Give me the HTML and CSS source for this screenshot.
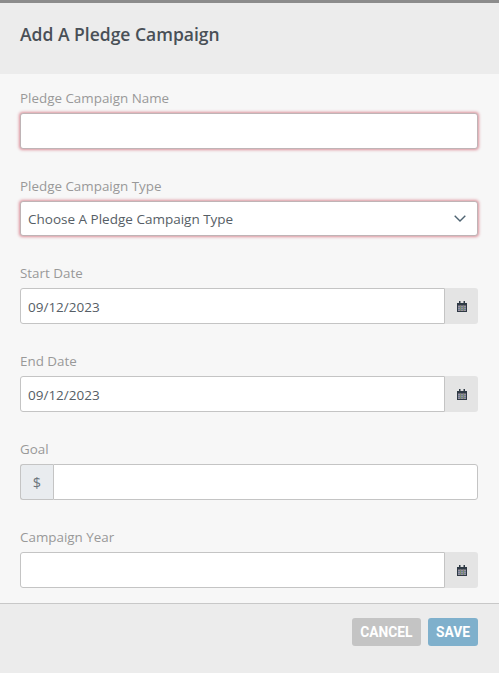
FILE: index.html
```html
<!doctype html>
<html lang="en">
  <head>
    <meta charset="utf-8">
    <title>Add A Pledge Campaign</title>
    <link rel="stylesheet" href="styles.css">
  </head>
  <body>
    <div class="modal">
      <div class="modal_header">
        <h4>Add A Pledge Campaign</h4>
      </div>
      <div class="modal_body">
        <div class="field">
          <label>Pledge Campaign Name</label>
          <input class="control control--invalid" type="text">
        </div>
        <div class="field">
          <label>Pledge Campaign Type</label>
          <div class="control control--invalid control--select">
            <span>Choose A Pledge Campaign Type</span>
            <svg width="12" height="7" viewBox="0 0 12 7"><path d="M.7.7L6 6l5.300-5.300" fill="none" stroke="#4f6472" stroke-width="1.400"/></svg>
          </div>
        </div>
        <div class="field">
          <label>Start Date</label>
          <div class="group">
            <input class="control group__input" type="text" value="09/12/2023">
            <span class="addon addon--right">
              <svg class="cal" width="10" height="11" viewBox="0 0 10 11"><use href="#cal"/></svg>
            </span>
          </div>
        </div>
        <div class="field">
          <label>End Date</label>
          <div class="group">
            <input class="control group__input" type="text" value="09/12/2023">
            <span class="addon addon--right">
              <svg class="cal" width="10" height="11" viewBox="0 0 10 11"><use href="#cal"/></svg>
            </span>
          </div>
        </div>
        <div class="field">
          <label>Goal</label>
          <div class="group">
            <span class="addon addon--left">$</span>
            <input class="control group__input group__input--right" type="text">
          </div>
        </div>
        <div class="field">
          <label>Campaign Year</label>
          <div class="group">
            <input class="control group__input" type="text">
            <span class="addon addon--right">
              <svg class="cal" width="10" height="11" viewBox="0 0 10 11"><use href="#cal"/></svg>
            </span>
          </div>
        </div>
      </div>
      <div class="modal_footer">
        <button class="btn btn--cancel">CANCEL</button>
        <button class="btn btn--save">SAVE</button>
      </div>
    </div>
    <svg class="sprite" width="0" height="0">
      <symbol id="cal" viewBox="0 0 10 11">
        <path d="M0 2h10v9H0z" fill="#2f3a45"/>
        <path d="M2 0h1.500v3H2zM6.500 0H8v3H6.500z" fill="#2f3a45"/>
        <path d="M1 4.500h8V10H1z" fill="#9a8fa0"/>
        <path d="M1 6h8v1H1zM1 8h8v1H1z" fill="#6b7f92"/>
        <path d="M3 4.500h1V10H3zM6 4.500h1V10H6z" fill="#7a8a6e"/>
      </symbol>
    </svg>
  </body>
</html>
```

FILE: styles.css
```css
* {
  box-sizing: border-box;
}
body {
  margin: 0;
  font-family: "Open Sans", Arial, sans-serif;
  background: #f7f7f7;
}
.sprite {
  display: block;
}
.modal {
  width: 499px;
  height: 673px;
  display: flex;
  flex-direction: column;
  border-top: 3px solid #8c8c8c;
  overflow: hidden;
}
/*--------------------------*/
.modal_header {
  height: 71px;
  padding: 19px 20px;
  background: #ececec;
}
.modal_header h4 {
  margin: 0;
  font-size: 17.5px;
  line-height: 24px;
  font-weight: 600;
  color: #495057;
}
/*--------------------------*/
.modal_body {
  flex: 1;
  padding: 14px 21px 0 20px;
  overflow: hidden;
}
.field {
  margin-bottom: 27px;
}
.field label {
  display: block;
  height: 25px;
  font-size: 13.400px;
  line-height: 20px;
  color: #999999;
}
.control {
  display: block;
  width: 100%;
  height: 36px;
  padding: 1px 7px 0;
  border: 1px solid #c4c4c4;
  border-radius: 3px;
  background: #ffffff;
  font-family: inherit;
  font-size: 13.500px;
  color: #565e66;
  outline: none;
}
.control--invalid {
  border-color: #bfb4b6;
  box-shadow: 0 0 3px 1px #dc919b;
}
.control--select {
  display: flex;
  align-items: center;
  justify-content: space-between;
  height: 35px;
  padding: 0 11px 0 7px;
}
/*--------------------------*/
.group {
  display: flex;
  height: 36px;
}
.group__input {
  flex: 1;
  border-radius: 3px 0 0 3px;
}
.group__input--right {
  border-radius: 0 3px 3px 0;
}
.addon {
  display: flex;
  align-items: center;
  justify-content: center;
  font-size: 14.500px;
  color: #6c757d;
}
.addon--right {
  width: 33px;
  background: #e4e4e4;
  border-radius: 0 3px 3px 0;
}
.addon--left {
  width: 33px;
  background: #e9ecef;
  border: 1px solid #c4c4c4;
  border-right: 0;
  border-radius: 3px 0 0 3px;
}
/*--------------------------*/
.modal_footer {
  height: 70px;
  padding: 14px 21px 0 0;
  display: flex;
  justify-content: flex-end;
  align-items: flex-start;
  gap: 7px;
  background: #ececec;
  border-top: 1px solid #c8c8c8;
}
.btn {
  height: 28px;
  padding: 0 8px;
  border: 0;
  border-radius: 3px;
  font-family: Roboto, Arial, sans-serif;
  font-size: 13.800px;
  font-weight: 700;
  color: #ffffff;
}
.btn--cancel {
  padding: 0 8.500px;
  background: #c4c4c4;
}
.btn--save {
  background: #7fb0cc;
}
```
